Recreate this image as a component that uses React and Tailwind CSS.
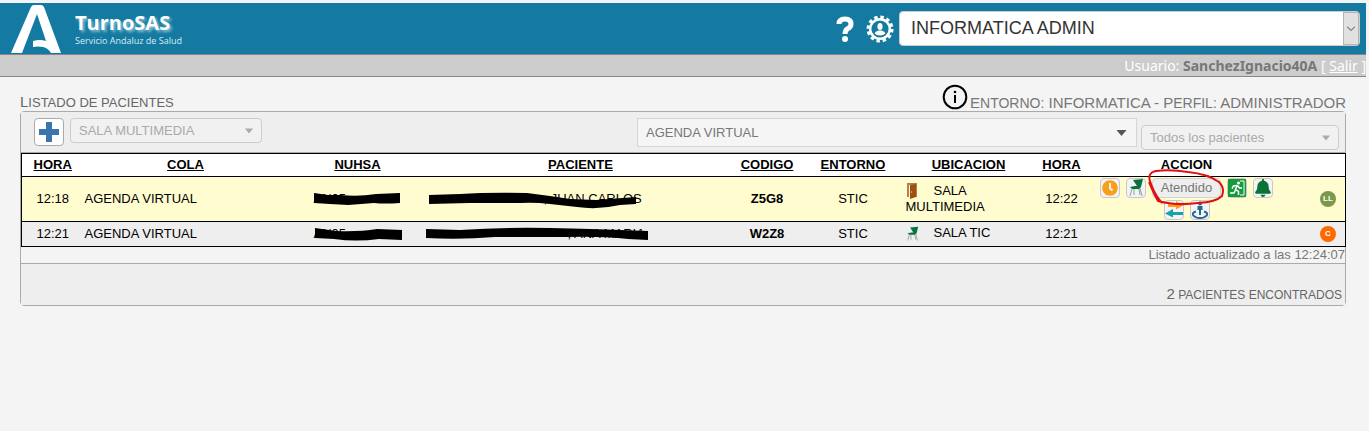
import { useState } from "react";
import { FaBell, FaClock } from "react-icons/fa";

const columns = [
  { label: "HORA", width: "w-[62px]", sortable: true },
  { label: "COLA", width: "w-[204px]", sortable: true },
  { label: "NUHSA", width: "w-[140px]", sortable: true },
  { label: "PACIENTE", width: "w-[306px]", sortable: true },
  { label: "CODIGO", width: "w-[67px]", sortable: true },
  { label: "ENTORNO", width: "w-[105px]", sortable: true },
  { label: "UBICACION", width: "w-[126px]", sortable: true },
  { label: "HORA", width: "w-[60px]", sortable: true },
  { label: "ACCION", width: "w-[190px]" },
  { label: "", width: "w-[64px]" },
];

const Logo = () => (
  <svg viewBox="0 0 50 48" className="h-12 w-[50px]" fill="white">
    <path d="M20 2Q21 0 23 0h7q2 0 3 2l17 46H40q-3-5-8-6-5-1-10 0v-6q7-2 13 0L26 9 11 48H0z" />
  </svg>
);

const Question = () => (
  <svg viewBox="0 0 18 26" className="h-[26px] w-[18px]">
    <path d="M3 8Q3 3 9 3t6 5q0 3-3 4.500T9 18" fill="none" stroke="white" strokeWidth="5" />
    <circle cx="9" cy="23" r="3" fill="white" />
  </svg>
);

const GearUser = () => (
  <svg viewBox="0 0 28 28" className="size-7">
    <circle cx="14" cy="14" r="11.800" fill="none" stroke="white" strokeWidth="3.400" strokeDasharray="3.400 2.778" />
    <circle cx="14" cy="14" r="9.800" fill="none" stroke="white" strokeWidth="2.400" />
    <ellipse cx="14" cy="11.500" rx="2.600" ry="3.600" fill="white" />
    <path d="M8.500 18.500q.5-2 4-3h3q3.500 1 4 3-2 2-5.500 2t-5.500-2z" fill="white" />
  </svg>
);

const InfoIcon = () => (
  <svg viewBox="0 0 26 26" className="mb-px size-[26px]">
    <circle cx="13" cy="13" r="11.300" fill="none" stroke="black" strokeWidth="2" />
    <circle cx="13" cy="8" r="1.300" />
    <path d="M12 11h2v8h-2z" />
  </svg>
);

const Chair = () => (
  <svg viewBox="0 0 16 18" className="h-[18px] w-4">
    <path d="M4 10L2 17M6 10v6M11 10l1 6M12 9l2 8" stroke="#8aa596" fill="none" />
    <path d="M5 1l10-1-2 8-2 2H4L2 8l5-1h2z" fill="#08733f" />
  </svg>
);

const Door = () => (
  <svg viewBox="0 0 10 16" className="h-4 w-[10px]">
    <path d="M0 0h10v14H8V2H2v12H0z" fill="#b08050" />
    <path d="M3 2l6-1v13l-6 2z" fill="#a04f10" />
    <circle cx="4.500" cy="9" r=".7" fill="#f2c060" />
  </svg>
);

const Exit = () => (
  <svg viewBox="0 0 18 18" className="size-[18px]">
    <path d="M0 0h18v18H0z" fill="#159a3c" />
    <path d="M12 2h4v14h-4" fill="none" stroke="white" />
    <circle cx="10.500" cy="4" r="1.500" fill="white" />
    <path d="M9.500 6L7.500 10.500l3 2V16M7.500 11L6 14H2M9 6.500L5.500 7 4 9.500M10 7l1.500 2H14" fill="none" stroke="white" strokeWidth="1.500" />
  </svg>
);

const Swap = () => (
  <svg viewBox="0 0 18 18" className="size-[18px]">
    <path d="M3 3h8V0l7 4.500-7 4V6H3z" fill="#ff9d1e" />
    <path d="M18 11H8V8l-8 4.500 8 4V14h10z" fill="#17a3ad" />
  </svg>
);

const Person = () => (
  <svg viewBox="0 0 18 18" className="size-[18px]">
    <circle cx="9" cy="2.500" r="2" fill="#1f6a9a" />
    <path d="M6.500 5h5v4h-1.500v5h-2V9H6.500z" fill="#1f6a9a" />
    <path d="M5 10.500q-4 1-3 3.500 2 3 7 3t7-3q1-2.500-3-3.500" fill="none" stroke="#1f6a9a" strokeWidth="2" />
  </svg>
);

const Arrow = ({ className }) => (
  <svg viewBox="0 0 10 6" className={`pointer-events-none absolute top-1/2 -translate-y-1/2 ${className}`} fill="currentColor">
    <path d="M0 0h10L5 6z" />
  </svg>
);

const IconButton = ({ label, children }) => (
  <button type="button" aria-label={label} className="flex size-5 items-center justify-center rounded-sm border border-[#c8c8c8] bg-[#f4f4f4]">
    {children}
  </button>
);

const Location = ({ icon, children }) => (
  <>
    <span className="mr-[15px] inline-flex w-[13px] justify-center align-middle">{icon}</span>
    {children}
  </>
);

// marker strokes that hide the personal data of each patient
const patients = [
  {
    time: "12:18",
    queue: "AGENDA VIRTUAL",
    id: "AN05",
    idMark: "M0 2L14 4H26Q45 6 62 3L86 2V12Q70 13 60 12L34 14 16 13 0 12z",
    name: ", JUAN CARLOS",
    namePad: "pl-[114px]",
    nameMark: "M-1 4L30 3Q60 1 97 2L120 5 140 8 166 9 206 6V13L190 14Q168 19 147 16L120 13Q104 11 90 12L40 12-1 13z",
    code: "Z5G8",
    place: "SALA MULTIMEDIA",
    icon: <Door />,
    placeTime: "12:22",
    row: "h-[45px] bg-[#fffdd0]",
    status: "LL",
    badge: "bg-[#7a9a4b]",
    actions: true,
  },
  {
    time: "12:21",
    queue: "AGENDA VIRTUAL",
    id: "AN05",
    idMark: "M1 2L22 5Q45 6 63 3L88 4V14L65 13Q42 16 20 13L1 12z",
    name: ", ANA MARIA",
    namePad: "pl-[138px]",
    nameMark: "M-4 3L30 4Q75 1 120 2T190 4L218 5V14L198 13Q172 10 135 11L65 11Q30 14 -4 12z",
    code: "W2Z8",
    place: "SALA TIC",
    icon: <Chair />,
    placeTime: "12:21",
    row: "h-[25px] bg-[#eeeeee]",
    status: "C",
    badge: "bg-[#ff6a00]",
  },
];

const Actions = () => (
  <div className="relative flex flex-wrap justify-center gap-x-[6px] gap-y-[2px]">
    <IconButton label="Esperar"><FaClock className="size-4 text-[#f9a01b]" /></IconButton>
    <IconButton label="Sala"><Chair /></IconButton>
    <button type="button" className="h-5 rounded-sm border border-[#d2d2d2] bg-[#eeeeee] px-2 text-[#777777]">Atendido</button>
    <IconButton label="Salida"><Exit /></IconButton>
    <IconButton label="Avisar"><FaBell className="size-[18px] shrink-0 text-[#0b7336]" /></IconButton>
    <IconButton label="Derivar"><Swap /></IconButton>
    <IconButton label="Ubicar"><Person /></IconButton>
    <svg viewBox="0 0 80 40" className="pointer-events-none absolute -top-[10px] left-[54px] h-10 w-20" fill="none" stroke="#e01010" strokeWidth="2">
      <path d="M16 35Q9 27 5 16 0 5 10 3 24 1 42 4 62 6 73 14 79 20 76 28 70 34 52 35 30 38 12 33 9 28 3 14" />
    </svg>
  </div>
);

const Header = () => (
  <header>
    <div className="flex h-[51px] items-center bg-[#147aa1] pl-[11px] pr-[6px]">
      <Logo />
      <div className="ml-[14px] flex-1 text-white">
        <h1 className="font-['Open_Sans',sans-serif] text-[20px] leading-6 font-bold [text-shadow:2px_2px_3px_#8fc3d8]">TurnoSAS</h1>
        <p className="font-['Open_Sans',sans-serif] text-[9px] leading-3 text-[#d5edf6]">Servicio Andaluz de Salud</p>
      </div>
      <button type="button" aria-label="Ayuda"><Question /></button>
      <button type="button" aria-label="Configuración" className="ml-3"><GearUser /></button>
      <div className="relative ml-[5px] w-[461px]">
        <select aria-label="Perfil" className="h-[35px] w-full appearance-none rounded-sm border border-[#cccccc] bg-white pl-[11px] text-[18px] text-[#333333]">
          <option>INFORMATICA ADMIN</option>
        </select>
        <span className="pointer-events-none absolute inset-y-px right-px flex w-4 items-center justify-center border border-[#b5b5b5] bg-[#e1e1e1]">
          <svg viewBox="0 0 8 5" className="h-[5px] w-2" fill="none" stroke="#444444"><path d="M0 .5l4 4 4-4" /></svg>
        </span>
      </div>
    </div>
    <div className="h-[23px] border-y border-[#888888] bg-[#cccccc] text-right font-['Noto_Sans',sans-serif] text-[14px] leading-[22px] text-white">
      Usuario: <b className="text-[#777777]">SanchezIgnacio40A</b> [ <a href="#salir" className="underline">Salir</a> ]
    </div>
  </header>
);

const Toolbar = () => {
  const [agenda, setAgenda] = useState("AGENDA VIRTUAL");

  return (
    <div className="flex h-[41px] items-start border-b border-[#aaaaaa] bg-[#eeeeee] pt-[6px] pr-[6px] pl-[13px] text-[#aaaaaa]">
      <button type="button" aria-label="Añadir" className="flex h-7 w-[30px] items-center justify-center rounded-sm border border-[#aaaaaa] bg-white">
        <svg viewBox="0 0 20 20" className="size-5" fill="#3a76ad"><path d="M7 0h6v7h7v6h-7v7H7v-7H0V7h7z" /></svg>
      </button>
      <div className="relative ml-[6px] w-[192px]">
        <select disabled aria-label="Sala" className="h-[25px] w-full appearance-none rounded-sm border border-[#cccccc] bg-[#f1f1f1] pl-2">
          <option>SALA MULTIMEDIA</option>
        </select>
        <Arrow className="right-[9px] h-[6px] w-2" />
      </div>
      <div className="relative mr-1 ml-auto w-[500px]">
        <select
          aria-label="Agenda"
          value={agenda}
          onChange={(e) => setAgenda(e.target.value)}
          className="h-[29px] w-full appearance-none border border-[#d5d5d5] bg-[#f5f5f5] pl-2 text-[#777777]"
        >
          <option>AGENDA VIRTUAL</option>
        </select>
        <Arrow className="right-[10px] h-[6px] w-[11px] text-[#555555]" />
      </div>
      <div className="relative mb-[2px] w-[198px] self-end">
        <select disabled aria-label="Filtro" className="block h-[25px] w-full appearance-none rounded-sm border border-[#cccccc] bg-[#f1f1f1] pl-2">
          <option>Todos los pacientes</option>
        </select>
        <Arrow className="right-[9px] h-[6px] w-2" />
      </div>
    </div>
  );
};

const Redacted = ({ text, mark, width, pad = "" }) => (
  <div className={`relative whitespace-nowrap ${pad}`}>
    {text}
    <svg viewBox={`0 0 ${width} 18`} className="absolute top-0 left-0 h-[18px] overflow-visible" style={{ width }}>
      <path d={mark} />
    </svg>
  </div>
);

const PatientTable = () => (
  <table className="w-full table-fixed border-collapse border border-black leading-4 text-black">
    <thead>
      <tr className="h-[23px] border border-black bg-white">
        {columns.map((col, index) => (
          <th key={index} className={`${col.width} p-0 font-bold`}>
            {col.sortable ? <a href="#orden" className="underline">{col.label}</a> : col.label}
          </th>
        ))}
      </tr>
    </thead>
    <tbody>
      {patients.map((patient) => (
        <tr key={patient.code} className={`border border-black ${patient.row}`}>
          <td className="p-0 text-center">{patient.time}</td>
          <td className="p-0 pl-px">{patient.queue}</td>
          <td className="p-0 pl-[26px]"><Redacted text={patient.id} mark={patient.idMark} width={88} /></td>
          <td className="p-0 pl-[2px]"><Redacted text={patient.name} mark={patient.nameMark} width={220} pad={patient.namePad} /></td>
          <td className="p-0 text-center font-bold">{patient.code}</td>
          <td className="p-0 text-center">STIC</td>
          <td className="p-0"><Location icon={patient.icon}>{patient.place}</Location></td>
          <td className="p-0 text-center">{patient.placeTime}</td>
          <td className="p-0">{patient.actions && <Actions />}</td>
          <td className="p-0 pr-[9px]">
            <span className={`ml-auto flex size-4 items-center justify-center rounded-full text-[8px] font-bold text-white ${patient.badge}`}>{patient.status}</span>
          </td>
        </tr>
      ))}
    </tbody>
  </table>
);

const App = () => (
  <div className="min-h-screen bg-[#f4f4f4] pt-[3px] pr-[3px] font-['Liberation_Sans',Arial,sans-serif] text-[13px]">
    <Header />
    <main className="px-5 text-[#777777]">
      <div className="flex h-[34px] items-end justify-between leading-4">
        <h2 className="text-[13px] text-[#666666] uppercase first-letter:text-[15px]">Listado de pacientes</h2>
        <div className="flex items-end">
          <InfoIcon />
          <span className="ml-[2px] text-[15px]">
            E<span className="text-[14px]">NTORNO:</span> INFORMATICA - P<span className="text-[14px]">ERFIL:</span> ADMINISTRADOR
          </span>
        </div>
      </div>
      <section className="rounded-sm border border-[#aaaaaa]">
        <Toolbar />
        <PatientTable />
        <p className="text-right leading-4">Listado actualizado a las 12:24:07</p>
        <footer className="flex h-[42px] items-end justify-end border-t border-[#aaaaaa] bg-[#eeeeee] pr-[3px] text-[#666666]">
          <p className="text-[12px] uppercase first-letter:text-[15px]">2 pacientes encontrados</p>
        </footer>
      </section>
    </main>
  </div>
);

export default App;
